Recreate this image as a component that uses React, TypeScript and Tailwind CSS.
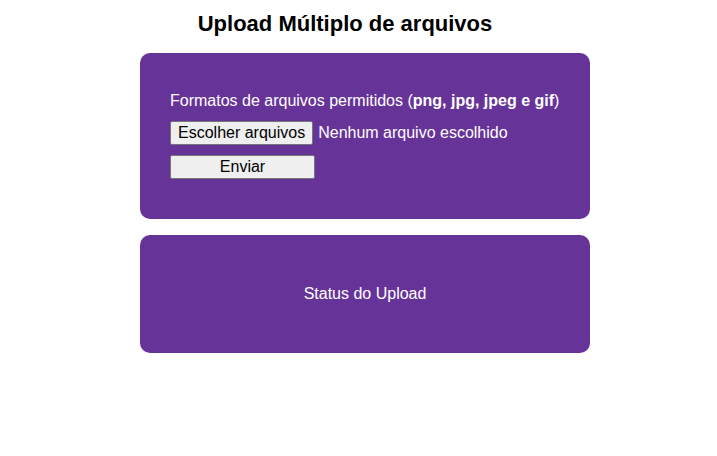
export default function App() {
  return (
    <div className="min-h-screen bg-white font-['Liberation_Sans',Arial,sans-serif] text-black">
      {/* Title */}
      <div className="w-[690px] pt-[10px] text-center">
        <h1 className="text-[22px] font-bold leading-[28px]">Upload Múltiplo de arquivos</h1>
      </div>

      <div className="ml-[140px] mt-[15px] flex w-[450px] flex-col gap-[16px]">
        {/* Upload form */}
        <div className="flex h-[166px] flex-col rounded-[10px] bg-[#663399] px-[30px] pt-[38px] text-[16px] text-white">
          <p className="leading-[20px]">
            Formatos de arquivos permitidos (<b>png, jpg, jpeg e gif</b>)
          </p>
          <div className="mt-[10px] flex items-center gap-[5px]">
            <button className="h-[24px] rounded-[2px] border border-[#767676] bg-[#efefef] px-[7px] leading-[20px] text-black">
              Escolher arquivos
            </button>
            <span>Nenhum arquivo escolhido</span>
          </div>
          <div className="mt-[10px]">
            <button className="h-[24px] w-[145px] rounded-[2px] border border-[#767676] bg-[#efefef] leading-[20px] text-black">
              Enviar
            </button>
          </div>
        </div>

        {/* Status */}
        <div className="flex h-[118px] items-center justify-center rounded-[10px] bg-[#663399] text-[16px] text-white">
          Status do Upload
        </div>
      </div>
    </div>
  );
}
